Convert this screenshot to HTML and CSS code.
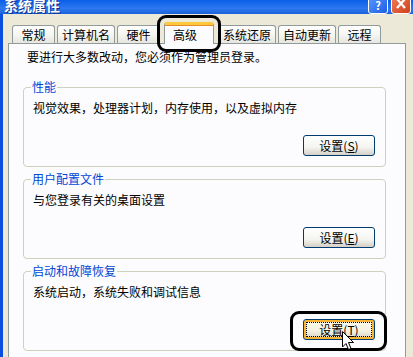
FILE: index.html
```html
<!DOCTYPE html>
<html lang="zh-CN">
  <head>
    <meta charset="UTF-8" />
    <title>系统属性</title>
    <link rel="stylesheet" href="styles.css">
  </head>
  <body>
    <div class="titlebar">
      <span class="title">系统属性</span>
      <div class="caption-buttons">
        <span class="cap-btn help">?</span>
        <span class="cap-btn close">
          <svg width="12" height="10" viewBox="0 0 12 10"><path d="M2 0 L10 9 M10 0 L2 9" stroke="#fff" stroke-width="2.2"/></svg>
        </span>
      </div>
    </div>

    <div class="window-body">
      <div class="tabs">
        <div class="tab">常规</div>
        <div class="tab">计算机名</div>
        <div class="tab">硬件</div>
        <div class="tab active">高级<span class="mark mark-tab"></span></div>
        <div class="tab">系统还原</div>
        <div class="tab">自动更新</div>
        <div class="tab">远程</div>
      </div>

      <div class="panel">
        <p class="intro">要进行大多数改动，您必须作为管理员登录。</p>

        <fieldset class="group">
          <legend>性能</legend>
          <p>视觉效果，处理器计划，内存使用，以及虚拟内存</p>
          <div class="actions">
            <button type="button" class="btn">设置(<u>S</u>)</button>
          </div>
        </fieldset>

        <fieldset class="group">
          <legend>用户配置文件</legend>
          <p>与您登录有关的桌面设置</p>
          <div class="actions">
            <button type="button" class="btn">设置(<u>E</u>)</button>
          </div>
        </fieldset>

        <fieldset class="group">
          <legend>启动和故障恢复</legend>
          <p>系统启动，系统失败和调试信息</p>
          <div class="actions">
            <div class="btn-wrap">
              <button type="button" class="btn hot">设置(<u>T</u>)</button>
              <span class="mark mark-btn"></span>
              <svg class="cursor" width="13" height="21" viewBox="0 0 13 21">
                <path d="M0.5 0.5 L0.5 16 L4 12.5 L6.5 18.5 L9 17.5 L6.5 11.5 L11.5 11.5 Z" fill="#fff" stroke="#000" stroke-width="1"/>
              </svg>
            </div>
          </div>
        </fieldset>
      </div>
    </div>
  </body>
</html>
```

FILE: styles.css
```css
* {
  box-sizing: border-box;
}
body {
  margin: 0;
  width: 413px;
  height: 357px;
  overflow: hidden;
  background-color: #ece9d8;
  font-family: "Noto Sans CJK SC", "Liberation Sans", sans-serif;
  font-size: 12px;
  color: #000;
}
p {
  margin: 0;
  line-height: 16px;
}

.titlebar {
  height: 14px;
  display: flex;
  justify-content: space-between;
  overflow: hidden;
  background: linear-gradient(to bottom, #0a5ee8, #2d78f0 60%, #1a62d8);
}
.title {
  margin: -4px 0 0 4px;
  color: #fff;
  font-weight: bold;
  font-size: 14px;
  line-height: 18px;
  text-shadow: 1px 1px 0 #0a2a8a;
}
.caption-buttons {
  display: flex;
  gap: 3px;
  margin-right: 2px;
}
.cap-btn {
  width: 20px;
  height: 20px;
  margin-top: -6px;
  border: 1px solid #fff;
  border-radius: 3px;
  display: flex;
  justify-content: center;
  align-items: flex-end;
  padding-bottom: 2px;
  color: #fff;
  font-weight: bold;
  font-size: 11px;
  line-height: 12px;
}
.close {
  padding-bottom: 4px;
  background: linear-gradient(135deg, #f08060, #d0401a);
}
.help {
  background: linear-gradient(135deg, #5b9bff, #1c5ee6);
}

.window-body {
  border-left: 3px solid #0a4ee0;
  padding: 8px 7px 0 5px;
  height: 343px;
}

.tabs {
  display: flex;
  align-items: flex-end;
  gap: 2px;
  padding-left: 4px;
  position: relative;
  z-index: 1;
}
.tab {
  min-width: 43px;
  height: 18px;
  padding: 0 4px;
  line-height: 17px;
  text-align: center;
  border: 1px solid #919b9c;
  border-bottom: none;
  border-radius: 3px 3px 0 0;
  background: linear-gradient(to bottom, #fff, #f3f3ef 60%, #e6e5de);
  white-space: nowrap;
}
.tab.active {
  position: relative;
  width: 50px;
  height: 22px;
  margin: 0 2px -1px;
  padding: 0 16px 0 8px;
  line-height: 19px;
  text-align: left;
  background: #fcfcfe;
  border-top: 3px solid #ffc83c;
  box-shadow: inset 0 1px 0 #e68b2c;
}

.mark {
  position: absolute;
  border: 3px solid #000;
  border-radius: 9px;
  pointer-events: none;
}
.mark-tab {
  left: -8px;
  right: -8px;
  top: -10px;
  bottom: -8px;
}

.panel {
  height: 320px;
  border: 1px solid #919b9c;
  border-bottom: none;
  background-color: #fcfcfe;
  padding: 5px 19px 0 14px;
}
.intro {
  margin: 0 0 14px 4px;
}

.group {
  margin: 0 0 4px;
  padding: 5px 9px 10px 9px;
  border: 1px solid #d0d0bf;
  border-radius: 4px;
}
.group legend {
  padding: 0 1px;
  margin-left: -2px;
  line-height: 16px;
  color: #0046d5;
}
.actions {
  display: flex;
  justify-content: flex-end;
  margin-top: 19px;
  padding-right: 1px;
}

.btn {
  width: 72px;
  height: 21px;
  padding: 0;
  font-family: inherit;
  font-size: 12px;
  line-height: 17px;
  color: #000;
  border: 1px solid #003c74;
  border-radius: 3px;
  background: linear-gradient(to bottom, #fff, #f4f4f0 60%, #d6d0c5);
}
.btn.hot {
  box-shadow: inset 0 0 0 2px #f8b330;
  outline: 1px dotted #000;
  outline-offset: -4px;
  background: linear-gradient(to bottom, #fffbe8, #f4f1e0 60%, #d6d0c0);
}

.btn-wrap {
  position: relative;
}
.mark-btn {
  left: -13px;
  right: -12px;
  top: -8px;
  bottom: -11px;
}
.cursor {
  position: absolute;
  left: 39px;
  top: 12px;
}
```
